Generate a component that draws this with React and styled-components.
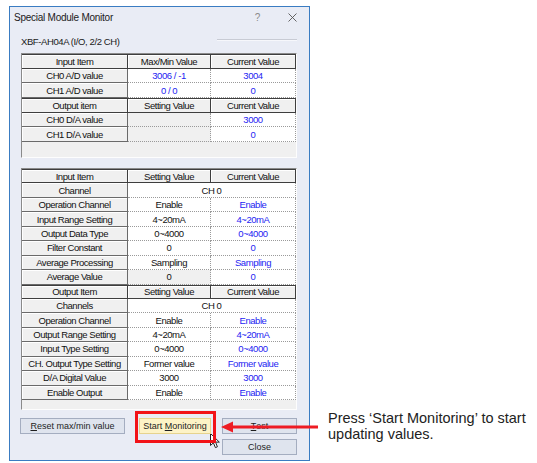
import React from 'react';
import styled, { createGlobalStyle } from 'styled-components';

const GlobalStyle = createGlobalStyle`
  html, body { margin: 0; padding: 0; background: #fff; }
  body { font-family: "Liberation Sans", Arial, sans-serif; }
`;

const Page = styled.div`
  position: relative;
  display: flex;
  align-items: flex-start;
  width: 537px;
  height: 463px;
  box-sizing: border-box;
  padding: 6px 0 0 9px;
`;

const Window = styled.div`
  width: 301px;
  height: 455px;
  box-sizing: border-box;
  border: 1px solid #3a7cc2;
  background: #e9ecf5;
  display: flex;
  flex-direction: column;
`;

const TitleBar = styled.div`
  height: 20px;
  display: flex;
  align-items: center;
  padding-left: 4px;
  font-size: 10px;
  letter-spacing: -0.25px;
  color: #1b1b1b;
`;

const TitleText = styled.span`
  flex: 1;
`;

const HelpGlyph = styled.span`
  color: #8a8a8a;
  font-size: 10px;
  margin-right: 28px;
`;

const CloseGlyph = styled.svg`
  width: 9px;
  height: 9px;
  margin-right: 12px;
`;

const Body = styled.div`
  flex: 1;
  display: flex;
  flex-direction: column;
  padding: 0 12px 0 11px;
`;

const ModuleRow = styled.div`
  display: flex;
  align-items: center;
  height: 12px;
  margin: 8px 0 6px;
  font-size: 9.5px;
  letter-spacing: -0.4px;
  color: #1a1a1a;
`;

const ModuleLine = styled.div`
  flex: 1;
  margin-left: 97px;
  margin-top: -3px;
  border-top: 1px solid #c8cbd4;
  border-bottom: 1px solid #f6f7fb;
`;

const Panel = styled.div`
  height: ${({ $h }) => $h}px;
  box-sizing: border-box;
  border-top: 1px solid #8a8a8a;
  border-left: 1px solid #8a8a8a;
  border-right: 1px solid #fdfdfd;
  border-bottom: 1px solid #fdfdfd;
  background: #f0f0f0;
  margin-bottom: ${({ $mb }) => $mb || 0}px;
  overflow: hidden;
`;

const Grid = styled.div`
  display: grid;
  grid-template-columns: 106px 83px 85px;
  grid-auto-rows: ${({ $row }) => $row}px;
`;

const Cell = styled.div`
  display: flex;
  align-items: center;
  justify-content: center;
  box-sizing: border-box;
  font-size: 9.5px;
  letter-spacing: -0.45px;
  white-space: nowrap;
  overflow: hidden;
  color: ${({ $blue }) => ($blue ? '#2424f2' : '#111')};
  grid-column: ${({ $span }) => ($span ? 'span 2' : 'auto')};
`;

const HeadCell = styled(Cell)`
  background: #f0f0f0;
  border-top: 1px solid #3e3e3e;
  border-right: 1px solid #3e3e3e;
  border-bottom: 1px solid #3e3e3e;
  box-shadow: inset 1px 1px 0 #fff;
`;

const LabelCell = styled(Cell)`
  background: #f0f0f0;
  border-right: 1px solid #6a6a6a;
  border-bottom: 1px solid #6a6a6a;
  box-shadow: inset 1px 1px 0 #fff;
`;

const ValueCell = styled(Cell)`
  background: ${({ $off }) => ($off ? '#f0f0f0' : '#fff')};
  border-right: 1px dotted #9a9a9a;
  border-bottom: 1px dotted #9a9a9a;
`;

const ButtonRow = styled.div`
  display: flex;
  align-items: flex-start;
  margin: 8px 0 0 -1px;
`;

const Button = styled.button`
  width: ${({ $w }) => $w}px;
  height: 16px;
  box-sizing: border-box;
  padding: 0;
  border: 1px solid ${({ $hot }) => ($hot ? '#e6d38e' : '#a4adc0')};
  background: ${({ $hot }) => ($hot ? '#fdf3c6' : '#dfe4ee')};
  font-family: "Liberation Sans", Arial, sans-serif;
  font-size: 9px;
  color: #1e1e1e;
  display: flex;
  align-items: center;
  justify-content: center;
`;

const StartWrap = styled.div`
  position: relative;
  margin-left: 14px;
  &::after {
    content: '';
    position: absolute;
    top: -7px;
    left: -4px;
    right: -5px;
    bottom: -9px;
    border: 3px solid #f21218;
  }
`;

const ButtonStack = styled.div`
  display: flex;
  flex-direction: column;
  gap: 5px;
  margin-left: 11px;
`;

const Note = styled.div`
  margin: 404px 0 0 18px;
  font-size: 14.5px;
  line-height: 16px;
  color: #222;
  white-space: nowrap;
`;

const Arrow = styled.svg`
  position: absolute;
  left: 220px;
  top: 421px;
  width: 100px;
  height: 12px;
`;

const Cursor = styled.svg`
  position: absolute;
  left: 210px;
  top: 433px;
  width: 11px;
  height: 16px;
`;

const inputRows = [
  ['CH0 A/D value', '3006 / -1', '3004'],
  ['CH1 A/D value', '0 / 0', '0'],
];

const outputRows = [
  ['CH0 D/A value', '3000'],
  ['CH1 D/A value', '0'],
];

const inputParams = [
  ['Operation Channel', 'Enable'],
  ['Input Range Setting', '4~20mA'],
  ['Output Data Type', '0~4000'],
  ['Filter Constant', '0'],
  ['Average Processing', 'Sampling'],
];

const outputParams = [
  ['Operation Channel', 'Enable'],
  ['Output Range Setting', '4~20mA'],
  ['Input Type Setting', '0~4000'],
  ['CH. Output Type Setting', 'Former value'],
  ['D/A Digital Value', '3000'],
  ['Enable Output', 'Enable'],
];

function HeadRow({ cols }) {
  return cols.map((c) => <HeadCell key={c}>{c}</HeadCell>);
}

function ParamRow({ label, setting, off }) {
  return (
    <>
      <LabelCell>{label}</LabelCell>
      <ValueCell $off={off}>{setting}</ValueCell>
      <ValueCell $blue>{setting}</ValueCell>
    </>
  );
}

export default function App() {
  return (
    <Page>
      <GlobalStyle />
      <Cursor viewBox="0 0 11 16">
        <path d="M0.5 0.5 L0.5 12.5 L3.4 9.8 L5.4 14.6 L7.4 13.8 L5.5 9.1 L9.3 9.1 Z" fill="#fff" stroke="#222" strokeWidth="1" strokeLinejoin="round" />
      </Cursor>
      <Window>
        <TitleBar>
          <TitleText>Special Module Monitor</TitleText>
          <HelpGlyph>?</HelpGlyph>
          <CloseGlyph viewBox="0 0 9 9">
            <path d="M0.5 0.5 L8.5 8.5 M8.5 0.5 L0.5 8.5" stroke="#555" strokeWidth="0.9" />
          </CloseGlyph>
        </TitleBar>
        <Body>
          <ModuleRow>
            XBF-AH04A (I/O, 2/2 CH)
            <ModuleLine />
          </ModuleRow>

          <Panel $h={105} $mb={10}>
            <Grid $row={14.67}>
              <HeadRow cols={['Input Item', 'Max/Min Value', 'Current Value']} />
              {inputRows.map(([label, mm, cur]) => (
                <React.Fragment key={label}>
                  <LabelCell>{label}</LabelCell>
                  <ValueCell $blue>{mm}</ValueCell>
                  <ValueCell $blue>{cur}</ValueCell>
                </React.Fragment>
              ))}
              <HeadRow cols={['Output item', 'Setting Value', 'Current Value']} />
              {outputRows.map(([label, cur]) => (
                <React.Fragment key={label}>
                  <LabelCell>{label}</LabelCell>
                  <ValueCell $off />
                  <ValueCell $blue>{cur}</ValueCell>
                </React.Fragment>
              ))}
            </Grid>
          </Panel>

          <Panel $h={242}>
            <Grid $row={14.44}>
              <HeadRow cols={['Input Item', 'Setting Value', 'Current Value']} />
              <LabelCell>Channel</LabelCell>
              <ValueCell $span>CH 0</ValueCell>
              {inputParams.map(([label, v]) => (
                <ParamRow key={label} label={label} setting={v} />
              ))}
              <ParamRow label="Average Value" setting="0" off />
              <HeadRow cols={['Output Item', 'Setting Value', 'Current Value']} />
              <LabelCell>Channels</LabelCell>
              <ValueCell $span>CH 0</ValueCell>
              {outputParams.map(([label, v]) => (
                <ParamRow key={label} label={label} setting={v} />
              ))}
            </Grid>
          </Panel>

          <ButtonRow>
            <Button $w={105}><u>R</u>eset max/min value</Button>
            <StartWrap>
              <Button $w={72} $hot>Start&nbsp;<u>M</u>onitoring</Button>
            </StartWrap>
            <ButtonStack>
              <Button $w={75}><u>T</u>est</Button>
              <Button $w={75}>Close</Button>
            </ButtonStack>
          </ButtonRow>
        </Body>
      </Window>

      <Note>
        Press ‘Start Monitoring’ to start
        <br />
        updating values.
      </Note>

      <Arrow viewBox="0 0 100 12">
        <path d="M12 4.6 H98 V7.4 H12 Z" fill="#ee1c24" />
        <path d="M1 6 L13 0.5 L13 11.5 Z" fill="#ee1c24" />
      </Arrow>
    </Page>
  );
}
